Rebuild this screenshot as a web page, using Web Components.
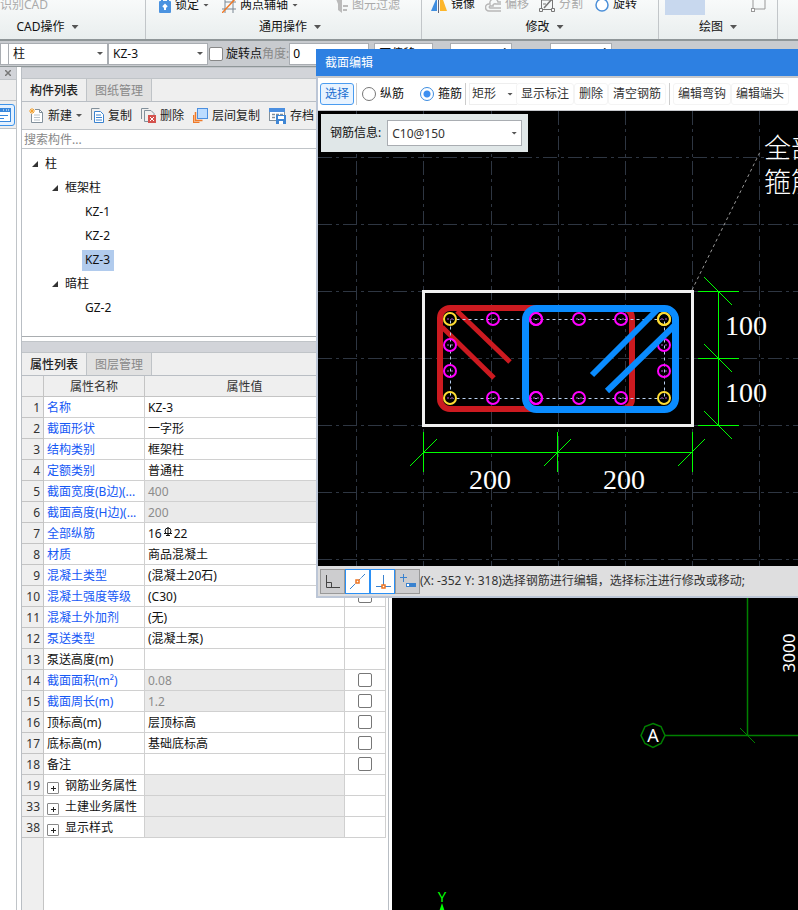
<!DOCTYPE html>
<html lang="zh-CN">
<head>
<meta charset="utf-8">
<title>截面编辑</title>
<style>
    html, body { margin: 0; height: 100%; }
    body {
        font: 12px/16px "Noto Sans", "Noto Sans CJK SC", sans-serif;
        color: #111;
        background: #fff;
        overflow: hidden;
    }
</style>
</head>
<body>
<cad-app></cad-app>

<script>
(() => {
    const ICONS = {
        lock: `<svg width="12" height="16" viewBox="0 0 12 16"><path d="M3 5V2a3 3 0 0 1 6 0v3" fill="none" stroke="#4b93e0" stroke-width="2"/><rect y="4" width="12" height="12" rx="1" fill="#4b93e0"/><path d="M6 13V8M4 10l2-2 2 2" fill="none" stroke="#fff" stroke-width="2"/></svg>`,
        axis: `<svg width="14" height="16" viewBox="0 0 14 16" fill="none"><path d="M3 1v11h11M0 12h3v4M11 0v16M3 5h11" stroke="#7a8793"/><path d="M0 16L14 1" stroke="#f07a28" stroke-width="1.5"/></svg>`,
        filter: `<svg width="12" height="16" viewBox="0 0 12 16"><path d="M0 2h6v14l-4-3V7z" fill="#bbb"/><path d="M7 9h5M7 13h4" stroke="#bbb" stroke-width="2"/></svg>`,
        mirror: `<svg width="16" height="18" viewBox="0 0 16 18"><path d="M0 16L6 2v14z" fill="#3f8ee0"/><path d="M9 2h2l5 14H9z" fill="#fdb62b"/><path d="M7.500 0v18" stroke="#667"/></svg>`,
        offset: `<svg width="16" height="16" viewBox="0 0 16 16" fill="none" stroke="#b8b8b8" stroke-width="1.500"><path d="M16 15H4a3 3 0 0 1 0-7h1a4 4 0 0 1 8-2h3M16 12H5a1 1 0 0 1 1-2h2a2 2 0 0 1 3-2h5"/></svg>`,
        split: `<svg width="16" height="16" viewBox="0 0 16 16" fill="none" stroke="#777"><path d="M2 4h12M2 13.500h12M2.500 2v12M13.500 4v10"/><path d="M5 12L13 3" stroke-width="1.500"/><path d="M.500 12.500h3v3h-3zM12.500 12.500h3v3h-3zM4 8h3" fill="#f4f6f6"/></svg>`,
        rotate: `<svg width="14" height="16" viewBox="0 0 14 16"><circle cx="7" cy="9" r="6" fill="#fff" stroke="#4b8fd8" stroke-width="1.500"/></svg>`,
        create: `<svg width="15" height="15" viewBox="0 0 15 15" fill="none"><path d="M2.500 6v8.500h11v-10l-3-3H6" fill="#fff" stroke="#82909b"/><path d="M10.500 1.500v3h3" stroke="#82909b"/><path d="M5 7h6M5 9.500h6M5 12h6" stroke="#b8c2ca"/><path d="M3 0v6M0 3h6M1 1l4 4M5 1L1 5" stroke="#f5a12c"/></svg>`,
        copy: `<svg width="13" height="15" viewBox="0 0 13 15" fill="none"><path d="M.500 12V.500h8" stroke="#82909b"/><path d="M3.500 3.500v11h9v-8l-3-3z" fill="#fff" stroke="#3a82cf"/><path d="M5 7h5M5 9.500h6M5 12h6" stroke="#3a82cf"/></svg>`,
        remove: `<svg width="15" height="15" viewBox="0 0 15 15" fill="none"><path d="M.500 11V.500h7M10 2.500H3.500v11H7M10 2.500l3 3V7" stroke="#82909b"/><rect x="7" y="7" width="8" height="8" fill="#d4524e"/><path d="M9 9l4 4M13 9l-4 4" stroke="#fff"/></svg>`,
        layers: `<svg width="15" height="15" viewBox="0 0 15 15" fill="none"><path d="M.500 7v7.500h6M2.500 4v8.500h7" stroke="#f07a28" stroke-width="1.500"/><rect x="4.500" y=".500" width="10" height="10" fill="#bcdcff" stroke="#4b8fe0"/></svg>`,
        save: `<svg width="17" height="16" viewBox="0 0 17 16"><rect x=".500" y=".500" width="15" height="12" fill="#fff" stroke="#82909b"/><rect width="16" height="4" fill="#4b8fe0"/><path d="M3 6.500h3M7 6.500h3M11 6.500h3M3 9.500h3" stroke="#82909b" stroke-width="1.500"/><rect x="7" y="7" width="10" height="9" fill="#3f86d4"/><rect x="9" y="8" width="6" height="3" fill="#fff"/><rect x="10" y="13" width="4" height="3" fill="#fff"/></svg>`,
        shape: `<svg width="16" height="16" viewBox="0 0 16 16" fill="none" stroke="#999"><path d="M2 14V2M14 2v11H3"/><rect x=".500" y="12.500" width="3" height="3" fill="#fff"/></svg>`,
        corner: `<svg width="20" height="20" viewBox="0 0 20 20" fill="none" stroke="#444"><path d="M3.500 4v12.500H17M3.500 11.500h5v5"/></svg>`,
        midpoint: `<svg width="20" height="20" viewBox="0 0 20 20" fill="none"><path d="M2 18L17 3" stroke="#3a82cf" stroke-dasharray="7 1"/><rect x="8" y="9" width="3" height="3" fill="#fff" stroke="#ee7420" stroke-width="1.500"/></svg>`,
        foot: `<svg width="20" height="20" viewBox="0 0 20 20" fill="none"><path d="M10.500 4v10M3 15.500h6M12 15.500h6" stroke="#3a82cf"/><rect x="9" y="14" width="3" height="3" fill="#fff" stroke="#ee7420" stroke-width="1.500"/></svg>`,
        dynamic: `<svg width="20" height="20" viewBox="0 0 20 20"><path d="M5.500 3v8M2 6.500h7" stroke="#3a82cf"/><rect x="8" y="12" width="10" height="4" fill="#3a82cf"/><rect x="9" y="13" width="2" height="2" fill="#fff"/></svg>`,
        rebar: `<svg width="10" height="10" viewBox="0 0 10 10" fill="none" stroke="#111"><circle cx="5" cy="4" r="3"/><path d="M5 0v9M1 6.500h8M3 8.500h4"/></svg>`
    };

    const define = (name, html, setup) => {
        customElements.define(name, class extends HTMLElement {
            connectedCallback() {
                if (this.shadowRoot) return;
                const root = this.attachShadow({ mode: 'open' });
                root.innerHTML = typeof html === 'function' ? html(this) : html;
                if (setup) setup(root, this);
            }
        });
    };

    define('cad-icon', el => `
<style>
    :host { display: inline-flex; flex: none; }
    svg { display: block; }
</style>${ICONS[el.getAttribute('name')] || ''}`);

    // small downward triangle used by menus and combos
    define('drop-arrow', `
<style>
    :host {
        display: inline-block;
        flex: none;
        width: 7px;
        height: 4px;
        background: #555;
        clip-path: polygon(0 0, 100% 0, 50% 100%);
    }
    :host([small]) { width: 6px; height: 3px; }
</style>`);

    define('tool-item', el => `
<style>
    :host { display: block; flex: none; }
    button {
        all: unset;
        display: flex;
        align-items: center;
        gap: 4px;
        box-sizing: border-box;
        cursor: default;
        white-space: nowrap;
    }
    :host([disabled]) button { color: #aaa; }
    :host([boxed]) button { height: 22px; padding: 0 4px; border: 1px solid #f4f4f4; border-radius: 3px; color: #333; }
    :host([active]) button { border-color: #4a9cf0; background: #e8f3ff; color: #1b6fd0; }
</style>
<button type="button" ${el.hasAttribute('disabled') ? 'disabled' : ''}>
    ${el.hasAttribute('icon') ? `<cad-icon name="${el.getAttribute('icon')}"></cad-icon>` : ''}
    <slot></slot>
    ${el.hasAttribute('menu') ? '<drop-arrow small></drop-arrow>' : ''}
</button>`);

    define('combo-box', el => `
<style>
    :host { display: grid; align-items: center; }
    select {
        grid-area: 1 / 1;
        appearance: none;
        box-sizing: border-box;
        width: 100%;
        height: 100%;
        margin: 0;
        padding: 1px 16px 0 4px;
        border: 1px solid #a9adb2;
        border-radius: 0;
        background: #fff;
        font: inherit;
        color: inherit;
    }
    drop-arrow { grid-area: 1 / 1; justify-self: end; margin-right: 5px; pointer-events: none; }
</style>
<select aria-label="${el.getAttribute('label')}"><option>${el.getAttribute('value')}</option></select>
<drop-arrow small></drop-arrow>`);

    define('ribbon-group', el => `
<style>
    :host {
        display: flex;
        flex-direction: column;
        justify-content: flex-end;
        gap: 6px;
        min-width: 0;
        box-sizing: border-box;
        height: 39px;
        padding-bottom: 4px;
        border-right: 1px solid #c2c6c9;
    }
    .items { display: flex; align-items: center; height: 18px; white-space: nowrap; }
    .title {
        all: unset;
        display: flex;
        justify-content: center;
        align-items: center;
        gap: 7px;
        height: 16px;
    }
</style>
<div class="items"><slot></slot></div>
${el.hasAttribute('label') ? `<button class="title">${el.getAttribute('label')}<drop-arrow></drop-arrow></button>` : ''}`);

    define('ribbon-bar', `
<style>
    :host {
        display: grid;
        grid-template-columns: 146px 276px 237px 119px 1fr;
        align-items: end;
        height: 39px;
        overflow: hidden;
        border-bottom: 2px solid #8f9698;
        background: linear-gradient(#f8fafa, #e9eeee);
    }
    .cad { padding-right: 50px; }
    .common { padding-left: 13px; }
    .modify { padding-left: 9px; }
    .g1 { margin-right: 13px; }
    .g2 { margin-right: 38px; }
    .s1 { margin-right: 10px; }
    .s2 { margin-right: 12px; }
    .block { width: 40px; height: 22px; background: #c8d8ee; margin-left: 6px; }
    .block + cad-icon { margin-left: 46px; }
</style>
<ribbon-group class="cad" label="CAD操作"><tool-item disabled>识别CAD</tool-item></ribbon-group>
<ribbon-group class="common" label="通用操作">
    <tool-item class="g1" icon="lock" menu>锁定</tool-item>
    <tool-item class="g2" icon="axis" menu>两点辅轴</tool-item>
    <tool-item icon="filter" disabled>图元过滤</tool-item>
</ribbon-group>
<ribbon-group class="modify" label="修改">
    <tool-item class="s1" icon="mirror">镜像</tool-item>
    <tool-item class="s1" icon="offset" disabled>偏移</tool-item>
    <tool-item class="s2" icon="split" disabled>分割</tool-item>
    <tool-item icon="rotate">旋转</tool-item>
</ribbon-group>
<ribbon-group label="绘图"><div class="block"></div><cad-icon name="shape"></cad-icon></ribbon-group>`);

    define('option-bar', `
<style>
    :host {
        display: flex;
        align-items: center;
        height: 25px;
        border-bottom: 1px solid #8f9698;
        background: #c8cbcf;
    }
    combo-box { height: 22px; flex: none; }
    .lead { width: 8px; overflow: hidden; }
    .type, .name { width: 100px; }
    label { display: flex; align-items: center; gap: 2px; white-space: nowrap; }
    input[type=checkbox] {
        appearance: none;
        width: 14px;
        height: 14px;
        margin: 0 1px;
        border: 1px solid #888;
        border-radius: 2px;
        background: #fff;
    }
    .angle { color: #8a8a8a; }
    input[type=text] {
        box-sizing: border-box;
        height: 22px;
        min-width: 0;
        padding: 0 3px;
        border: 1px solid #a9adb2;
        background: #fff;
        font: inherit;
    }
    #angle { width: 80px; }
    .place { width: 59px; margin-left: 5px; }
    .spin { display: grid; align-items: start; margin-left: 17px; }
    .spin + .spin { margin-left: 38px; }
    .spin input, .spin i { grid-area: 1 / 1; }
    .spin input { width: 62px; }
    .spin i {
        justify-self: end;
        width: 5px;
        height: 3px;
        margin: 5px 5px 0 0;
        background: #444;
        clip-path: polygon(50% 0, 100% 100%, 0 100%);
    }
</style>
<combo-box class="lead" label="楼层" value=""></combo-box>
<combo-box class="type" label="构件类型" value="柱"></combo-box>
<combo-box class="name" label="构件" value="KZ-3"></combo-box>
<label><input type="checkbox">旋转点</label>
<label class="angle" for="angle">角度:</label>
<input type="text" id="angle" value="0">
<combo-box class="place" label="偏移方式" value="不偏移"></combo-box>
<div class="spin"><input type="text" aria-label="X"><i></i></div>
<div class="spin"><input type="text" aria-label="Y"><i></i></div>`);

    define('side-strip', `
<style>
    :host { display: flex; flex-direction: column; border-right: 1px solid #c0c4c8; background: #fff; overflow: hidden; }
    .head { display: flex; justify-content: center; align-items: center; height: 12px; border-bottom: 1px solid #c0c4c8; background: #d2d4d9; }
    .head button { all: unset; display: flex; }
    .gap { height: 20px; border-bottom: 1px solid #c0c4c8; background: #eee; }
    .tool { display: flex; justify-content: flex-end; padding: 3px 1px 2px 0; border-bottom: 1px solid #c0c4c8; background: #eee; }
    .tool button {
        all: unset;
        box-sizing: border-box;
        display: flex;
        align-items: center;
        padding: 3px;
        border: 1px solid #3d93ea;
        border-radius: 3px;
        background: #e4f1ff;
    }
</style>
<div class="head"><button aria-label="关闭"><svg width="6" height="6" viewBox="0 0 6 6"><path d="M0 0l6 6M6 0L0 6" stroke="#777" stroke-width="1.500"/></svg></button></div>
<div class="gap"></div>
<div class="tool"><button aria-label="属性面板"><svg width="16" height="14" viewBox="0 0 16 14"><rect x=".500" y=".500" width="15" height="13" fill="#fff" stroke="#3a88dc"/><rect width="16" height="4" fill="#3a88dc"/><path d="M8 2h1M11 2h1M13 2h1" stroke="#fff"/><path d="M3 7.500h10M3 10.500h6" stroke="#3a88dc"/></svg></button></div>`);

    define('dock-panel', el => {
        const tabs = el.getAttribute('tabs').split(',');
        return `
<style>
    :host { display: flex; flex-direction: column; min-height: 0; }
    .grip { height: 12px; flex: none; box-sizing: border-box; border-top: 1px solid #c0c4c8; border-bottom: 1px solid #c0c4c8; background: #d2d4d9; }
    .tabs { display: flex; flex: none; height: 22px; border-bottom: 1px solid #b9bec4; background: #efefef; }
    .tabs button {
        all: unset;
        box-sizing: border-box;
        width: 65px;
        padding-top: 1px;
        text-align: center;
        border-right: 1px solid #bfc3c7;
        background: #e1e1e1;
        color: #888;
    }
    .tabs button[aria-selected=true] { background: #efefef; color: #222; font-weight: 500; }
</style>
<div class="grip"></div>
<div class="tabs" role="tablist">${tabs.map((t, i) => `<button role="tab" aria-selected="${i === 0}">${t}</button>`).join('')}</div>
<slot></slot>`;
    });

    define('component-tree', `
<style>
    :host { display: block; }
    .bar { display: flex; align-items: center; height: 27px; padding-left: 7px; gap: 9px; border-bottom: 1px solid #c0c4c8; background: #efefef; color: #222; }
    input {
        display: block;
        box-sizing: border-box;
        width: 100%;
        height: 19px;
        padding: 0 2px;
        border: 0;
        border-bottom: 1px solid #c0c4c8;
        font: inherit;
    }
    input::placeholder { color: #888; opacity: 1; }
    ul { list-style: none; margin: 0; padding: 0; }
    .tree { box-sizing: border-box; height: 188px; padding: 3px 0 0 10px; border-bottom: 1px solid #a9adb0; background: #fff; }
    .tree ul { padding-left: 20px; }
    .tree ul ul { padding-left: 16px; }
    .row { display: flex; align-items: center; gap: 7px; height: 24px; }
    .row span { padding: 2px 4px 3px 3px; margin-left: -3px; }
    .row.on span { background: #b1cbed; }
    i { width: 6px; height: 6px; background: #333; clip-path: polygon(100% 0, 100% 100%, 0 100%); }
    .leaf { padding-left: 17px; }
</style>
<div class="bar">
    <tool-item icon="create" menu>新建</tool-item>
    <tool-item icon="copy">复制</tool-item>
    <tool-item icon="remove">删除</tool-item>
    <tool-item icon="layers">层间复制</tool-item>
    <tool-item icon="save">存档</tool-item>
</div>
<input type="search" placeholder="搜索构件..." aria-label="搜索构件">
<ul class="tree">
    <li><div class="row"><i></i><span>柱</span></div>
        <ul>
            <li><div class="row"><i></i><span>框架柱</span></div>
                <ul>
                    <li><div class="row leaf"><span>KZ-1</span></div></li>
                    <li><div class="row leaf"><span>KZ-2</span></div></li>
                    <li><div class="row leaf on"><span>KZ-3</span></div></li>
                </ul>
            </li>
            <li><div class="row"><i></i><span>暗柱</span></div>
                <ul><li><div class="row leaf"><span>GZ-2</span></div></li></ul>
            </li>
        </ul>
    </li>
</ul>`);

    // n, name, value, flags: b = blue name, g = greyed value, c = checkbox, x = expandable
    const PROPS = [
        [1, '名称', 'KZ-3', 'b'],
        [2, '截面形状', '一字形', 'bc'],
        [3, '结构类别', '框架柱', 'bc'],
        [4, '定额类别', '普通柱', 'bc'],
        [5, '截面宽度(B边)(...', '400', 'bgc'],
        [6, '截面高度(H边)(...', '200', 'bgc'],
        [7, '全部纵筋', '16<cad-icon name="rebar"></cad-icon>22', 'bc'],
        [8, '材质', '商品混凝土', 'bc'],
        [9, '混凝土类型', '(混凝土20石)', 'bc'],
        [10, '混凝土强度等级', '(C30)', 'bc'],
        [11, '混凝土外加剂', '(无)', 'b'],
        [12, '泵送类型', '(混凝土泵)', 'b'],
        [13, '泵送高度(m)', '', ''],
        [14, '截面面积(m²)', '0.08', 'bgc'],
        [15, '截面周长(m)', '1.2', 'bgc'],
        [16, '顶标高(m)', '层顶标高', 'c'],
        [17, '底标高(m)', '基础底标高', 'c'],
        [18, '备注', '', 'c'],
        [19, '钢筋业务属性', '', 'xg'],
        [33, '土建业务属性', '', 'xg'],
        [38, '显示样式', '', 'xg']
    ];

    const propRow = ([n, name, value, f]) => `
<tr>
    <th scope="row">${n}</th>
    <td class="${f.includes('b') ? 'blue' : ''}">${f.includes('x') ? `<button aria-label="展开${name}"><svg width="5" height="5" viewBox="0 0 5 5"><path d="M2.500 0v5M0 2.500h5" stroke="#222"/></svg></button>` : ''}${name}</td>
    <td class="${f.includes('g') ? 'grey' : ''}">${value}</td>
    <td class="check">${f.includes('c') ? `<input type="checkbox" aria-label="${name}">` : ''}</td>
</tr>`;

    define('property-table', `
<style>
    :host { display: flex; flex-direction: column; flex: 1; min-height: 0; background: #fff; }
    table { border-collapse: separate; border-spacing: 0; table-layout: fixed; width: 364px; }
    th, td {
        box-sizing: border-box;
        height: 21px;
        padding: 2px 3px 0;
        border-right: 1px solid #d0d0d0;
        border-bottom: 1px solid #d0d0d0;
        white-space: nowrap;
        overflow: hidden;
        text-align: left;
        font-weight: 400;
    }
    thead th { text-align: center; background: #efefef; border-color: #c4c4c4; color: #333; }
    tbody th { text-align: right; background: #efefef; border-color: #c4c4c4; color: #333; }
    td:nth-child(2) { padding-right: 0; }
    .blue { color: #1558f5; }
    .grey { background: #eaeaea; color: #8c8c8c; }
    .check { text-align: center; line-height: 0; padding-top: 0; }
    input {
        appearance: none;
        box-sizing: border-box;
        width: 14px;
        height: 14px;
        margin: 0;
        border: 1px solid #777;
        border-radius: 2px;
        background: #fff;
    }
    button {
        all: unset;
        box-sizing: border-box;
        display: inline-flex;
        justify-content: center;
        align-items: center;
        width: 12px;
        height: 12px;
        margin-right: 6px;
        border: 1px solid #888;
        border-radius: 1px;
        vertical-align: -1px;
    }
    cad-icon { margin: 0 1px; vertical-align: 1px; }
    .fill { flex: 1; width: 21px; border-right: 1px solid #c4c4c4; background: #efefef; }
</style>
<table>
    <colgroup><col style="width:22px"><col style="width:101px"><col style="width:200px"><col></colgroup>
    <thead><tr><th></th><th scope="col">属性名称</th><th scope="col">属性值</th><th></th></tr></thead>
    <tbody>${PROPS.map(propRow).join('')}</tbody>
</table>
<div class="fill"></div>`);

    define('plan-view', `
<style>
    :host { display: block; min-width: 0; overflow: hidden; background: #000; }
    svg { display: block; width: 100%; height: 100%; }
    text { font-family: "Noto Sans", sans-serif; fill: #fff; }
</style>
<svg role="img" aria-label="平面图">
    <g fill="none" stroke="#008000">
        <path d="M355.500 500v168M273 668.500h600" stroke-width="1.500"/>
        <path d="M348 661l15 15"/>
        <path d="M261 656.500l8 3 4 9-4 8-8 4-8-4-4-8 4-9z" stroke-width="1.500"/>
    </g>
    <text x="261" y="675" font-size="18" text-anchor="middle">A</text>
    <text transform="translate(403 586) rotate(-90)" font-size="17" text-anchor="middle">3000</text>
    <text x="50" y="835" font-size="15" text-anchor="middle" style="fill:#0f0">Y</text>
    <path d="M50 836l4 12h-8z" fill="#0f0"/>
</svg>`);

    const BAR_XS = [70, 113, 156, 198];
    const ring = (x, y, c) => `<circle cx="${x}" cy="${y}" r="6" stroke="${c}"/><path d="M${x - 3} ${y}h2m2 0h2" stroke="#5c2a6a"/>`;
    const rings = () => [
        ...BAR_XS.flatMap(x => [ring(x, 28, '#f0f'), ring(x, 107, '#f0f')]),
        ...[27, 241].flatMap(x => [ring(x, 54, '#f0f'), ring(x, 80, '#f0f'), ring(x, 28, '#fd3'), ring(x, 107, '#fd3')])
    ].join('');

    const gridLines = () => {
        let d = '';
        for (let i = 0; i < 20; i++) d += `M${Math.round(i * 67.2) - 28.5} 0V455`;
        for (let i = 0; i < 7; i++) d += `M0 ${i * 67 + 46.5}H1600`;
        return d;
    };

    // origin of the inner group is the top left corner of the column
    define('section-canvas', () => `
<style>
    :host { display: block; height: 455px; overflow: hidden; background: #000; }
    svg { display: block; width: 100%; height: 100%; }
    text { font: 28px "Liberation Serif", serif; fill: #fff; }
    .cjk { font-family: "Noto Sans CJK SC", sans-serif; font-weight: 300; font-size: 27px; }
</style>
<svg role="img" aria-label="柱截面配筋">
    <path d="${gridLines()}" stroke="#2e3642" fill="none" stroke-dasharray="14 4 3 4"/>
    <g transform="translate(105 180)" fill="none">
        <path d="M269 -1L337 -139" stroke="#999" stroke-dasharray="3 3"/>
        <rect x=".500" y=".500" width="269" height="134" stroke="#f0f0f0" stroke-width="3"/>
        <rect x="17" y="17" width="192" height="101" rx="10" stroke="#cc1a20" stroke-width="6"/>
        <path d="M34 20l53 51M19 36l52 51" stroke="#cc1a20" stroke-width="5"/>
        <rect x="27.500" y="28.500" width="214" height="79" stroke="#b8d0f0" stroke-dasharray="3 3"/>
        <g stroke-width="2">${rings()}</g>
        <rect x="102.500" y="17.500" width="150" height="101" rx="11" stroke="#0a8cff" stroke-width="7"/>
        <path d="M235 18L169 84M253 33L184 100" stroke="#0a8cff" stroke-width="6"/>
        <g stroke-width="2">${ring(241, 28, '#fd3')}${ring(113, 28, '#f0f')}${ring(113, 107, '#f0f')}</g>
        <g stroke="#0f0">
            <path d="M0 161.500h269M.500 141v40M134.500 141v40M269.500 141v40M295.500 0v134M275 .500h41M275 67.500h41M275 134.500h41"/>
            <path d="M-13 175l27-27M121 175l27-27M255 175l27-27M281 -14l28 28M281 53l28 28M281 120l28 28"/>
        </g>
        <text x="302" y="44">100</text>
        <text x="302" y="111">100</text>
        <text x="46" y="198">200</text>
        <text x="180" y="198">200</text>
        <text class="cjk" y="-133"><tspan x="341">全部</tspan><tspan x="341" dy="34">箍筋</tspan></text>
    </g>
</svg>`);

    define('section-dialog', `
<style>
    :host { display: block; border: 2px solid #bcc6d6; border-width: 0 0 2px 2px; background: #dededf; }
    header { height: 27px; padding: 0 7px; margin-left: -2px; border-left: 2px solid #2d80e2; background: #2d80e2; color: #fff; line-height: 27px; }
    .tools { display: flex; align-items: center; height: 32px; padding: 0 2px; overflow: hidden; border: 1px solid #c6c8cc; border-width: 2px 0 1px; background: #fff; }
    hr { flex: none; width: 1px; height: 22px; margin: 0 5px 0 2px; border: 0; background: #ccc; }
    hr.late { margin: 0 3px; }
    label { display: flex; flex: none; align-items: center; gap: 4px; margin-right: 16px; }
    label + label { margin-right: 0; }
    input[type=radio] {
        appearance: none;
        box-sizing: border-box;
        width: 14px;
        height: 14px;
        margin: 0;
        border: 1px solid #777;
        border-radius: 50%;
        background: #fff;
    }
    input[type=radio]:checked { border-color: #3d8de0; background: radial-gradient(circle, #3d8ff0 3px, #fff 4px); }
    .shape { display: grid; align-items: center; width: 48px; margin-right: -1px; }
    .shape select {
        grid-area: 1 / 1;
        appearance: none;
        width: 48px;
        height: 22px;
        padding: 0 2px;
        border: 1px solid #eee;
        border-right: 0;
        background: #fff;
        color: #333;
        font: inherit;
    }
    .shape drop-arrow { grid-area: 1 / 1; justify-self: end; margin-right: 4px; pointer-events: none; }
    .stage { display: grid; }
    .stage > * { grid-area: 1 / 1; min-width: 0; }
    .info {
        justify-self: start;
        align-self: start;
        z-index: 1;
        display: flex;
        align-items: center;
        gap: 6px;
        margin: 3px 3px;
        padding: 6px 6px 6px 9px;
        background: #e0e7e8;
    }
    .info combo-box { width: 135px; height: 26px; color: #333; }
    footer { display: flex; align-items: center; height: 30px; padding: 0 2px; color: #333; white-space: nowrap; }
    footer button {
        all: unset;
        box-sizing: border-box;
        display: flex;
        flex: none;
        justify-content: center;
        align-items: center;
        width: 25px;
        height: 25px;
        border: 1px solid #999;
        background: #cdcdcf;
    }
    footer button.on { border-color: #2b90f5; background: #fff; }
</style>
<header>截面编辑</header>
<div class="tools">
    <tool-item boxed active>选择</tool-item>
    <hr>
    <label><input type="radio" name="bar">纵筋</label>
    <label><input type="radio" name="bar" checked>箍筋</label>
    <hr class="late">
    <div class="shape"><select aria-label="箍筋形状"><option>矩形</option></select><drop-arrow small></drop-arrow></div>
    <tool-item boxed>显示标注</tool-item>
    <tool-item boxed>删除</tool-item>
    <tool-item boxed>清空钢筋</tool-item>
    <hr class="late">
    <tool-item boxed>编辑弯钩</tool-item>
    <tool-item boxed>编辑端头</tool-item>
</div>
<div class="stage">
    <section-canvas></section-canvas>
    <div class="info"><span>钢筋信息:</span><combo-box label="钢筋信息" value="C10@150"></combo-box></div>
</div>
<footer>
    <button aria-label="正交"><cad-icon name="corner"></cad-icon></button>
    <button class="on" aria-label="中点"><cad-icon name="midpoint"></cad-icon></button>
    <button class="on" aria-label="垂足"><cad-icon name="foot"></cad-icon></button>
    <button aria-label="动态输入"><cad-icon name="dynamic"></cad-icon></button>
    <span>(X: -352 Y: 318)选择钢筋进行编辑，选择标注进行修改或移动;</span>
</footer>`);

    define('cad-app', `
<style>
    :host { display: flex; flex-direction: column; position: relative; height: 100vh; overflow: hidden; }
    main { display: grid; grid-template-columns: 17px 368px 1fr; flex: 1; min-height: 0; column-gap: 4px; }
    .docks {
        display: grid;
        grid-template-rows: auto 1fr;
        gap: 4px;
        min-height: 0;
        box-sizing: border-box;
        border: 1px solid #b9bec4;
        border-width: 0 1px;
    }
    plan-view { margin-left: -1px; }
    /* floating window over the work area */
    section-dialog { position: absolute; left: 316px; top: 49px; right: 0; }
</style>
<ribbon-bar></ribbon-bar>
<option-bar></option-bar>
<main>
    <side-strip></side-strip>
    <div class="docks">
        <dock-panel tabs="构件列表,图纸管理"><component-tree></component-tree></dock-panel>
        <dock-panel tabs="属性列表,图层管理"><property-table></property-table></dock-panel>
    </div>
    <plan-view></plan-view>
</main>
<section-dialog></section-dialog>`);
})();
</script>
</body>
</html>
